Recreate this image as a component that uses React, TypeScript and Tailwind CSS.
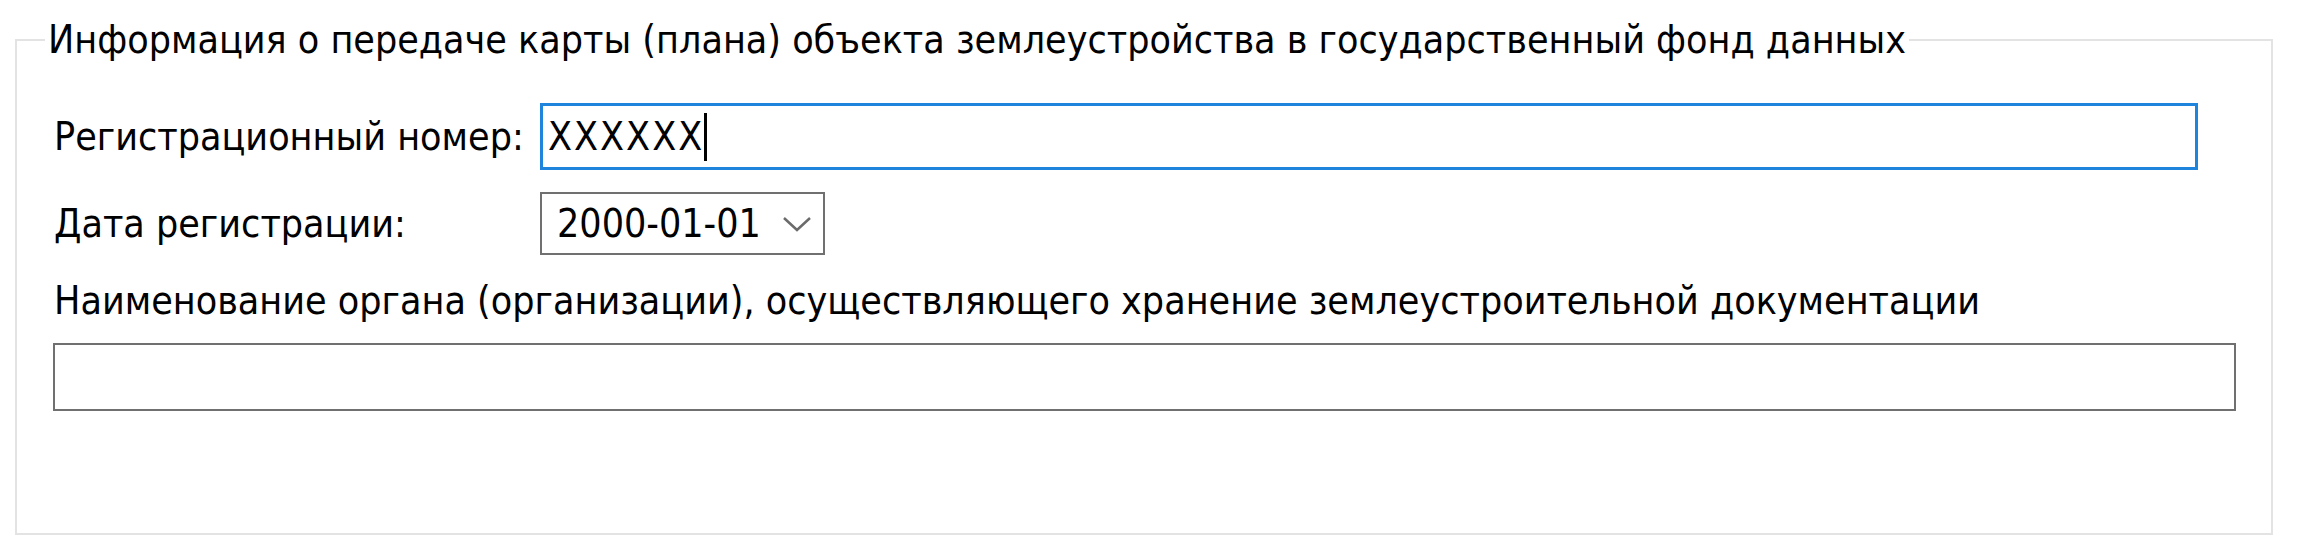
import React from "react";

const Chevron = () => (
  <svg width="28" height="16" viewBox="0 0 28 16" fill="none">
    <path d="M1 2 L14 14 L27 2" stroke="#6b6b6b" strokeWidth="2.5" />
  </svg>
);

const App = () => {
  return (
    <div className="w-[2302px] h-[559px] bg-white pt-[17px] pl-[15px] font-['DejaVu_Sans_Condensed','DejaVu_Sans',sans-serif] text-[39px] leading-[46px] text-black">
      <fieldset className="w-[2258px] h-[518px] border-2 border-[#e3e3e3] pl-[37px] pr-[35px] pt-[40px]">
        <legend className="-ml-[9px] px-[3px]">
          Информация о передаче карты (плана) объекта землеустройства в государственный фонд данных
        </legend>

        <div className="flex items-center h-[67px]">
          <span className="w-[486px] shrink-0">Регистрационный номер:</span>
          <div className="w-[1658px] h-[67px] border-[3px] border-[#1e84dc] pl-[5px] flex items-center">
            <span className="tracking-[2px]">XXXXXX</span>
            <span className="w-[3px] h-[48px] bg-black" />
          </div>
        </div>

        <div className="flex items-center h-[63px] mt-[22px]">
          <span className="w-[486px] shrink-0">Дата регистрации:</span>
          <div className="w-[285px] h-[63px] border-2 border-[#707070] pl-[15px] pr-[12px] flex items-center justify-between">
            <span>2000-01-01</span>
            <Chevron />
          </div>
        </div>

        <div className="mt-[23px]">
          Наименование органа (организации), осуществляющего хранение землеустроительной документации
        </div>

        <div className="mt-[19px] -ml-[1px] w-[2183px] h-[68px] border-2 border-[#707070]" />
      </fieldset>
    </div>
  );
};

export default App;
